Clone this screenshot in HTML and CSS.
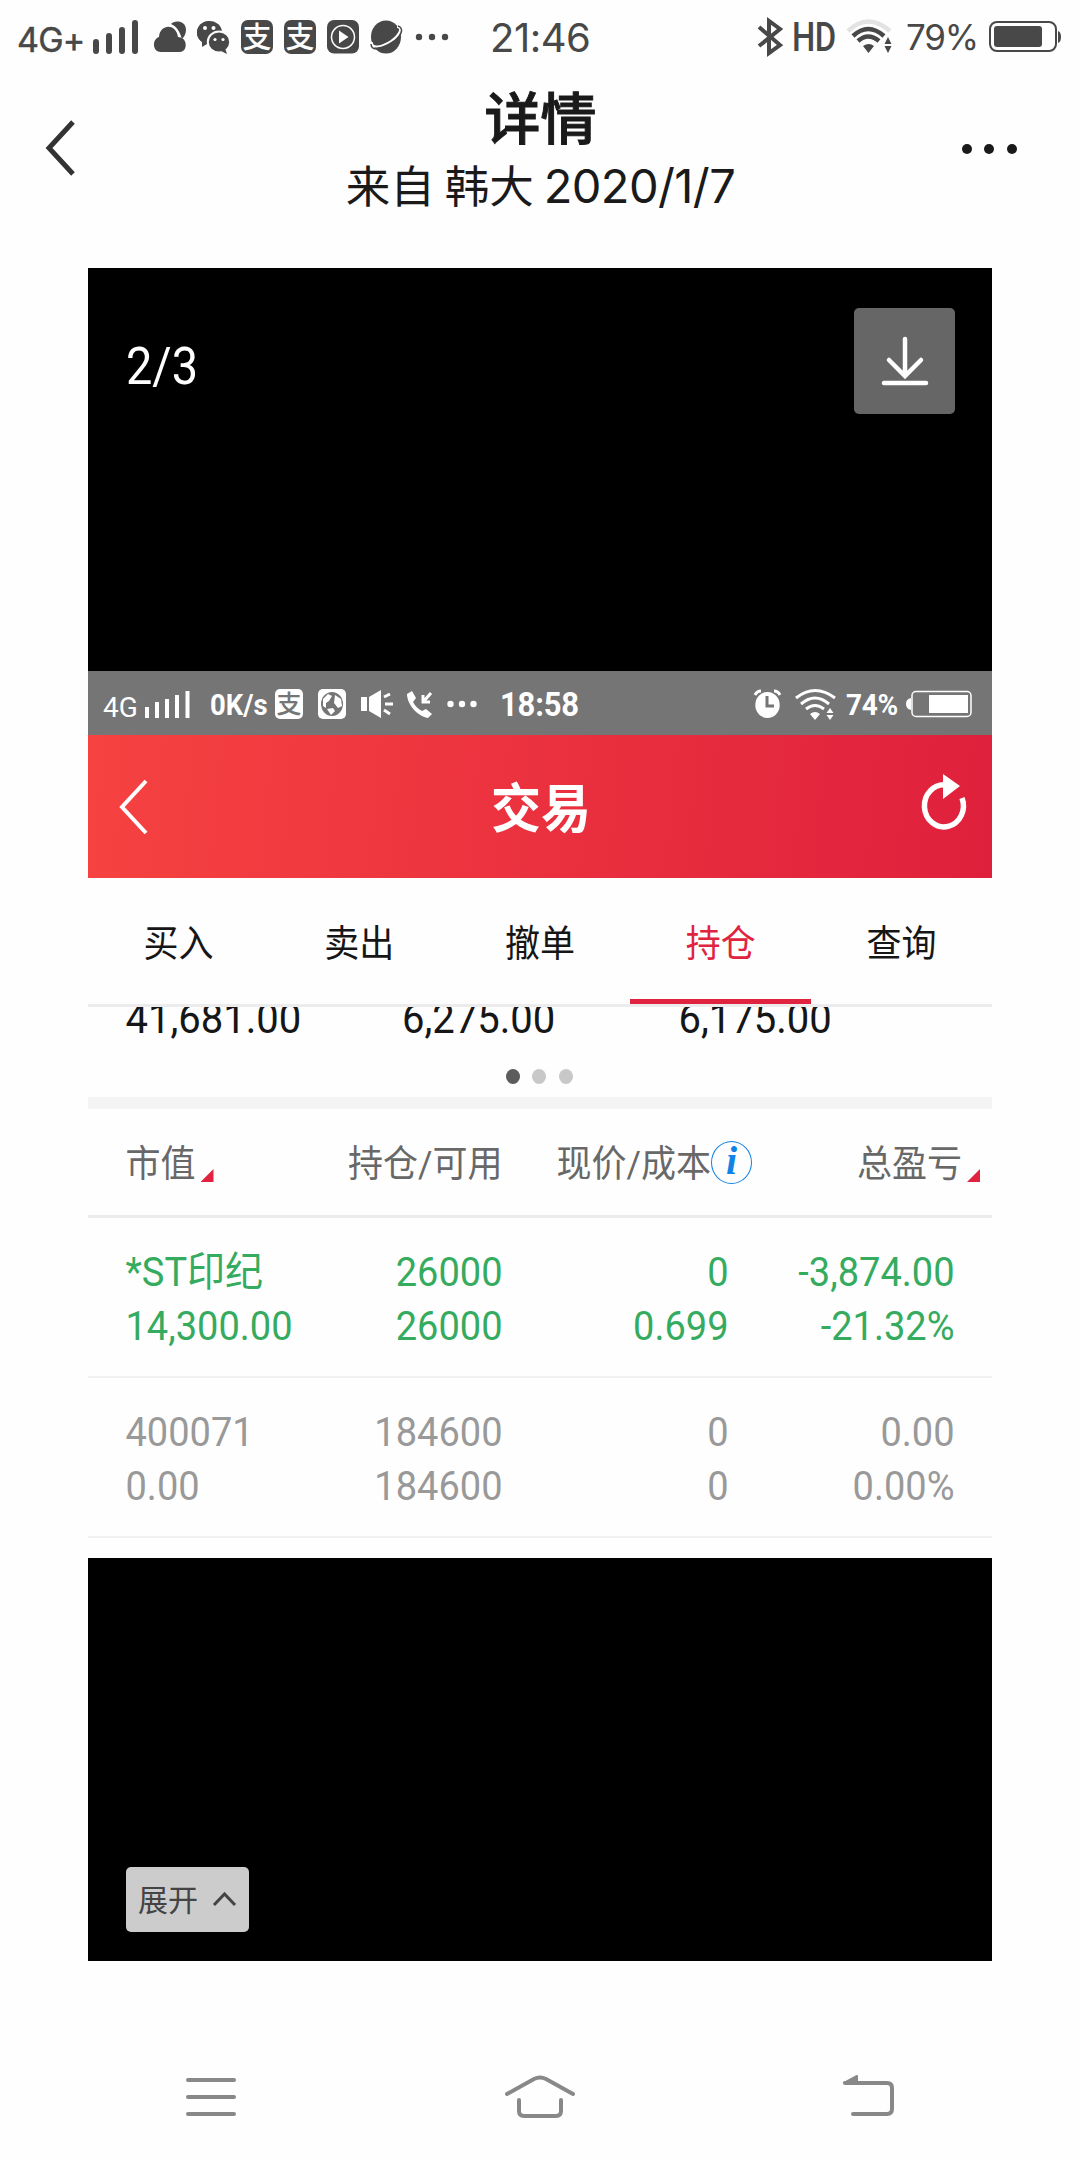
FILE: index.html
```
<!DOCTYPE html>
<html lang="zh-CN">
<head>
    <meta charset="UTF-8">
    <meta name="viewport" content="width=device-width, initial-scale=1.0">
    <title>详情</title>
    <link rel="stylesheet" href="styles.css">
</head>
<body>
    <div class="status-bar">
        <span class="network">4G+</span>
        <svg class="signal" width="46" height="34" viewBox="0 0 46 34"><path d="M3 22v9M16 16v15M29 10v21M42 3v28"/></svg>
        <div class="notices">
            <svg width="32" height="34" viewBox="0 0 32 34">
                <path d="M17 4C20 0 32 0 32 10C32 14 30 17 28 19C26 13 24 7 17 4Z"/>
                <path d="M7 32C-2 32-2 19 5 17C6 4 22 3 24 17C34 17 34 32 26 32Z"/>
            </svg>
            <svg width="33" height="34" viewBox="0 0 33 34">
                <path d="M13 1C5 1 0 6 0 13c0 4 2 7 5 9v5l5-3h3z"/><ellipse cx="12.500" cy="12.500" rx="12.500" ry="11.500"/>
                <ellipse class="paper-line" cx="22" cy="22" rx="11.200" ry="10.500"/><path d="M24 31l6 3-2-6z"/>
                <g class="paper"><circle cx="8" cy="8" r="2"/><circle cx="16.500" cy="8" r="2"/><circle cx="18" cy="19.500" r="1.600"/><circle cx="26" cy="19.500" r="1.600"/></g>
            </svg>
            <span class="pay-icon">支</span>
            <span class="pay-icon">支</span>
            <svg width="32" height="34" viewBox="0 0 32 34">
                <rect width="32" height="33.500" rx="7"/><circle class="ring" cx="16" cy="17" r="11.500"/><path class="paper" d="M12 10.500L21.500 17L12 23.500Z"/>
            </svg>
            <svg width="33" height="34" viewBox="0 0 33 34">
                <ellipse cx="16" cy="17" rx="15" ry="16.500"/><path class="orbit" d="M27 7C33 7 30 15 21 21S1 29 2 22"/><path class="orbit-edge" d="M28 6C35 8 31 17 22 23S1 32 1 24"/>
            </svg>
            <svg class="more" width="34" height="34" viewBox="0 0 34 34"><circle cx="5" cy="17" r="3.200"/><circle cx="18" cy="17" r="3.200"/><circle cx="31" cy="17" r="3.200"/></svg>
        </div>
        <span class="clock">21:46</span>
        <svg class="bluetooth" width="26" height="38" viewBox="0 0 26 38"><path d="M1 9l21 18-11 8V3l11 8L1 28"/></svg>
        <span class="hd">HD</span>
        <svg class="wifi" width="48" height="36" viewBox="0 0 48 36">
            <path class="faint" d="M2 12Q22-7 44 12"/><path d="M7 17Q22 3 38 17M12 22Q22 13 33 22"/><path class="solid" d="M17 27q6-4 11 0l-5.500 7zM42 18l3.500 7h-7zM42 34l3.500-7h-7z"/>
        </svg>
        <span class="percent">79%</span>
        <svg class="battery" width="74" height="34" viewBox="0 0 74 34"><rect class="shell" x="2" y="2" width="66" height="29" rx="7"/><rect x="6" y="6" width="48" height="21" rx="3"/><path d="M70 11q3 1 3 6t-3 6z"/></svg>
    </div>

    <header class="title-bar">
        <svg class="back" width="32" height="58" viewBox="0 0 32 58"><path d="M28 3L4 29L28 55"/></svg>
        <div class="titles">
            <h1>详情</h1>
            <p>来自 韩大 <span>2020/1/7</span></p>
        </div>
        <div class="menu-dots"><i></i><i></i><i></i></div>
    </header>

    <main class="photo">
        <div class="photo-top">
            <span class="counter">2/3</span>
            <div class="download">
                <svg width="48" height="52" viewBox="0 0 48 52"><path d="M24 5V42M8 26L24 42L40 26M3 49H45"/></svg>
            </div>
        </div>

        <div class="shot">
            <div class="shot-status">
                <span class="shot-net">4G</span>
                <svg class="shot-signal" width="45" height="28" viewBox="0 0 45 28"><path d="M2 28V17M12 28V12M22 28V9M32 28V5M42.500 28V1"/></svg>
                <span class="speed tall">0K/s</span>
                <span class="shot-pay">支</span>
                <svg class="globe" width="28" height="30" viewBox="0 0 28 30">
                    <rect width="28" height="30" rx="5"/><ellipse class="sea" cx="14" cy="15" rx="11" ry="12"/><path d="M5 10l5-5 4 2-3 5-3 2v5l-3-2zM17 6l6 4 1 7-4 2-4-5zM9 20l6-1 2 3-4 4z"/>
                </svg>
                <svg class="speaker" width="33" height="28" viewBox="0 0 33 28"><path d="M0 7h6v14H0zM8 7L20 0v28L8 21z"/><path class="line" d="M23 7l6-3M24 14h8M23 20l6 4"/></svg>
                <svg class="phone" width="26" height="28" viewBox="0 0 26 28"><path d="M0 4L5 1l4 7-3 4c2 4 5 7 9 9l4-2 6 5-4 4C10 26 0 14 0 4z"/><path class="line" d="M24 3l-7 8M16 5v7h7"/></svg>
                <svg class="shot-more" width="30" height="28" viewBox="0 0 30 28"><circle cx="3.500" cy="14" r="3.200"/><circle cx="15" cy="14" r="3.200"/><circle cx="26.500" cy="14" r="3.200"/></svg>
                <span class="shot-clock tall">18:58</span>
                <svg class="alarm" width="27" height="30" viewBox="0 0 27 30"><ellipse cx="13.500" cy="16" rx="12.200" ry="13"/><path class="line" d="M1 6Q3 2 7 2M26 6Q24 2 20 2"/><path class="hands" d="M13 7v10h7"/></svg>
                <svg class="shot-wifi" width="41" height="31" viewBox="0 0 41 31"><path class="line" d="M1 9Q20-6 40 9M6 15Q20 3 34 15M11 20Q20 13 29 20"/><path d="M15 25q5-4 10 0l-5 6zM35 19l3.500 5h-7zM35 31l3.500-5h-7z"/></svg>
                <span class="shot-percent tall">74%</span>
                <svg class="shot-battery" width="67" height="28" viewBox="0 0 67 28"><path d="M5 8v12q-5-1-5-6t5-6z"/><rect class="shell" x="6" y="1.500" width="59" height="25" rx="4"/><rect x="23" y="5" width="39" height="18"/></svg>
            </div>

            <div class="trade-bar">
                <svg width="28" height="56" viewBox="0 0 28 56"><path d="M27 2L3 28L27 54"/></svg>
                <h2 class="tall">交易</h2>
                <svg width="46" height="56" viewBox="0 0 46 56"><path d="M24 11A19.500 21 0 1 0 40 24"/><path class="arrow" d="M21 0L38 12L21 25Z"/></svg>
            </div>

            <nav class="tabs">
                <a><span class="tall">买入</span></a>
                <a><span class="tall">卖出</span></a>
                <a><span class="tall">撤单</span></a>
                <a class="active"><span class="tall">持仓</span></a>
                <a><span class="tall">查询</span></a>
            </nav>

            <!-- amounts are scrolled partly under the tabs -->
            <section class="summary">
                <div class="amounts">
                    <span class="tall">41,681.00</span>
                    <span class="tall">6,275.00</span>
                    <span class="tall">6,175.00</span>
                </div>
                <div class="pager"><i class="on"></i><i></i><i></i></div>
            </section>

            <section class="holdings">
                <div class="row head">
                    <div class="sortable"><span class="tall">市值</span></div>
                    <div><span class="tall">持仓/可用</span></div>
                    <div class="price-head"><span class="tall">现价/成本</span><span class="info">i</span></div>
                    <div class="sortable last"><span class="tall">总盈亏</span></div>
                </div>
                <div class="row loss">
                    <div><span class="tall">*ST印纪</span><span class="tall">14,300.00</span></div>
                    <div><span class="tall">26000</span><span class="tall">26000</span></div>
                    <div><span class="tall">0</span><span class="tall">0.699</span></div>
                    <div><span class="tall">-3,874.00</span><span class="tall">-21.32%</span></div>
                </div>
                <div class="row flat">
                    <div><span class="tall">400071</span><span class="tall">0.00</span></div>
                    <div><span class="tall">184600</span><span class="tall">184600</span></div>
                    <div><span class="tall">0</span><span class="tall">0</span></div>
                    <div><span class="tall">0.00</span><span class="tall">0.00%</span></div>
                </div>
            </section>
        </div>

        <div class="photo-bottom">
            <button class="expand"><span>展开</span>
                <svg width="25" height="16" viewBox="0 0 25 16"><path d="M2 14L12.500 3L23 14"/></svg>
            </button>
        </div>
    </main>

    <footer class="nav-bar">
        <svg width="50" height="44" viewBox="0 0 50 44"><path d="M2 5H48M2 22H48M2 39H48"/></svg>
        <svg width="70" height="44" viewBox="0 0 70 44"><path d="M2 19L29 4Q35 1 41 4L68 19M14 25V36Q14 41 19 41H51Q56 41 56 36V25"/></svg>
        <svg width="52" height="44" viewBox="0 0 52 44"><path d="M2 8H44Q49 8 49 13V34Q49 39 44 39H10"/><path class="tip" d="M1 8L14 1V8Z"/></svg>
    </footer>
</body>
</html>
```
FILE: styles.css
```
* {
    box-sizing: border-box;
}
body {
    margin: 0;
    width: 1080px;
    height: 2160px;
    background-color: #fefefe;
    font-family: Inter, "Noto Sans CJK SC", sans-serif;
    overflow: hidden;
}
svg {
    display: block;
    flex: none;
    fill: none;
    overflow: visible;
}
h1, h2, p {
    margin: 0;
}

/* phone status bar */
.status-bar {
    display: flex;
    align-items: center;
    height: 74px;
    padding-left: 17px;
    color: #484848;
    white-space: nowrap;
}
.status-bar svg {
    fill: #484848;
}
.network {
    width: 76px;
    font-size: 34px;
    letter-spacing: -.8px;
    padding-top: 5px;
    -webkit-text-stroke: .5px #484848;
}
.status-bar .signal {
    fill: none;
    stroke: #484848;
    stroke-width: 6;
    stroke-linecap: round;
}
.notices {
    display: flex;
    gap: 11px;
    margin-left: 15px;
}
.pay-icon {
    width: 32px;
    height: 34px;
    border-radius: 7px;
    background-color: #484848;
    color: #fefefe;
    font: 500 29px/31px "Noto Sans CJK SC", sans-serif;
    text-align: center;
}
.paper {
    fill: #fefefe;
}
.paper-line {
    stroke: #fefefe;
    stroke-width: 2;
}
.ring {
    fill: none;
    stroke: #fefefe;
    stroke-width: 1.5;
}
.orbit {
    fill: none;
    stroke: #fefefe;
    stroke-width: 2;
}
.orbit-edge {
    fill: none;
    stroke: #484848;
    stroke-width: 1.5;
}
.clock {
    width: 268px;
    margin-left: 42px;
    font-size: 40px;
    letter-spacing: -.5px;
}
.status-bar .bluetooth {
    fill: none;
    stroke: #484848;
    stroke-width: 4;
}
.hd {
    width: 54px;
    margin-left: 8px;
    font: 500 41px Roboto, sans-serif;
    letter-spacing: -.5px;
    transform: scaleX(.8);
    transform-origin: left;
}
.status-bar .wifi {
    fill: none;
    stroke: #484848;
    stroke-width: 4.5;
}
.wifi .faint {
    stroke: #e3e3e3;
}
.wifi .solid {
    fill: #484848;
    stroke: none;
}
.percent {
    width: 76px;
    margin-left: 12px;
    font-size: 35px;
    letter-spacing: -1.2px;
}
.battery {
    margin-left: 6px;
}
.battery .shell {
    fill: none;
    stroke: #484848;
    stroke-width: 2;
}

/* page title */
.title-bar {
    display: flex;
    justify-content: space-between;
    height: 194px;
    padding: 0 63px 0 45px;
    color: #1a1a1a;
}
.back {
    margin-top: 50px;
    stroke: #333;
    stroke-width: 5;
}
.title-bar .back {
    margin-top: 45px;
}
.titles {
    text-align: center;
    margin-left: 42px;
}
.titles h1 {
    font: 500 56px/86px "Noto Sans CJK SC", sans-serif;
    margin-top: -2px;
    -webkit-text-stroke: 1px #1a1a1a;
}
.titles p {
    font: 44.5px/52px "Noto Sans CJK SC", sans-serif;
    white-space: nowrap;
}
.titles p span {
    font-family: Inter, sans-serif;
    font-size: 47px;
    letter-spacing: -.6px;
}
.menu-dots {
    display: flex;
    gap: 12.5px;
    padding-top: 70px;
}
.menu-dots i {
    width: 10px;
    height: 10px;
    border-radius: 50%;
    background-color: #1a1a1a;
}

/* shared picture */
.photo {
    width: 904px;
    height: 1693px;
    margin: 0 auto;
    background-color: #000;
}
.photo-top {
    display: flex;
    justify-content: space-between;
    height: 403px;
    padding: 40px 37px 0 38px;
}
.counter {
    font: 51px/118px Roboto, sans-serif;
    color: #fff;
    transform: scaleX(.92);
    transform-origin: left;
}
.download {
    display: flex;
    justify-content: center;
    width: 101px;
    height: 106px;
    padding-top: 26px;
    border-radius: 5px;
    background-color: #666;
}
.download svg {
    stroke: #fff;
    stroke-width: 4.5;
    stroke-linecap: round;
}
.shot {
    height: 887px;
    background-color: #fefefe;
    font-family: Roboto, "Noto Sans CJK SC", sans-serif;
}
/* the picture is stretched a little in height */
.tall {
    display: inline-block;
    transform: scaleY(1.07);
}
.shot-status {
    display: flex;
    align-items: center;
    height: 64px;
    padding: 2px 0 0 15px;
    background-color: #757575;
    color: #fff;
    white-space: nowrap;
}
.shot-status svg {
    fill: #fff;
}
.shot-status .line {
    fill: none;
    stroke: #fff;
    stroke-width: 3;
}
.shot-net {
    width: 42px;
    padding-top: 6px;
    font-size: 28px;
}
.shot-signal {
    stroke: #fff;
    stroke-width: 4;
}
.speed {
    width: 65px;
    margin-left: 20px;
    font-size: 27.5px;
    font-weight: bold;
}
.shot-pay {
    width: 28px;
    height: 30px;
    border-radius: 5px;
    background-color: #fff;
    color: #757575;
    font: 500 25px/27px "Noto Sans CJK SC", sans-serif;
    text-align: center;
}
.globe {
    margin-left: 15px;
}
.globe .sea {
    fill: #757575;
}
.speaker {
    margin-left: 15px;
}
.phone {
    margin-left: 13px;
}
.shot-more {
    margin-left: 14px;
}
.shot-clock {
    width: 254px;
    margin-left: 23px;
    font-size: 31px;
    font-weight: bold;
    letter-spacing: -.2px;
}
.alarm .hands {
    fill: none;
    stroke: #757575;
    stroke-width: 3;
}
.shot-wifi {
    margin-left: 14px;
}
.shot-percent {
    width: 60px;
    margin-left: 10px;
    font-size: 28px;
    font-weight: bold;
    letter-spacing: -.3px;
}
.shot-status .shell {
    fill: none;
    stroke: #fff;
    stroke-width: 1.5;
}
.trade-bar {
    display: flex;
    align-items: center;
    justify-content: space-between;
    height: 143px;
    padding: 0 24px 0 31px;
    background: linear-gradient(95deg, #f64241, #df203c);
    color: #fff;
}
.trade-bar h2 {
    font-size: 50px;
    font-weight: bold;
    margin: -6px 0 0 13px;
}
.trade-bar svg {
    stroke: #fff;
    stroke-width: 4;
}
.trade-bar svg:last-child {
    stroke-width: 5.5;
    margin-top: -9px;
}
.trade-bar .arrow {
    fill: #fff;
    stroke: none;
}
.tabs {
    display: flex;
    height: 129px;
    border-bottom: 3px solid #ececec;
    color: #161616;
    font-size: 35px;
}
.tabs a {
    flex: 1;
    padding-top: 5px;
    line-height: 124px;
    height: 126px;
    text-align: center;
    border-bottom: 5px solid transparent;
}
.tabs .active {
    color: #e0243f;
    border-bottom-color: #e0243f;
}
.summary {
    height: 102px;
    border-bottom: 12px solid #f4f4f4;
    overflow: hidden;
}
.amounts {
    display: flex;
    height: 62px;
    padding-left: 37.5px;
    color: #161616;
    font-size: 40px;
    line-height: 25px;
}
.amounts span {
    width: 276.5px;
}
.pager {
    display: flex;
    justify-content: center;
    gap: 12.5px;
    margin-right: 2px;
}
.pager i {
    width: 14px;
    height: 15px;
    border-radius: 50%;
    background-color: #c8c8c8;
}
.pager .on {
    background-color: #5c5c5c;
}
.row {
    display: flex;
    height: 160px;
    padding-top: 27px;
    border-bottom: 2px solid #f1f1f1;
    font-size: 38px;
    line-height: 54px;
}
.row > div {
    display: flex;
    flex-direction: column;
    width: 226px;
    min-width: 0;
    flex: none;
    padding-right: 37.5px;
    text-align: right;
    white-space: nowrap;
}
.row > div:first-child {
    padding: 0 0 0 37.5px;
    text-align: left;
}
.row.head {
    height: 109px;
    padding-top: 26px;
    border-bottom: 3px solid #ececec;
    color: #686868;
    font-size: 35px;
}
.row.head > div {
    flex-direction: row;
    justify-content: flex-end;
}
.row.head .tall {
    margin-top: 4px;
}
.row.head > div:first-child {
    justify-content: flex-start;
}
.sortable::after {
    content: "";
    width: 13px;
    height: 13px;
    margin: 34px 0 0 5px;
    background-color: #e0243f;
    clip-path: polygon(100% 0, 100% 100%, 0 100%);
}
.row.head .last {
    padding-right: 12px;
}
.row.head .price-head {
    padding-right: 14px;
}
.info {
    width: 41px;
    height: 43px;
    margin-top: 6px;
    border: 1.5px solid #1183e6;
    border-radius: 50%;
    color: #1183e6;
    font: italic bold 40px/38px "Liberation Serif", serif;
    text-align: center;
}
.loss {
    color: #35ab5f;
}
.flat {
    color: #999;
}
.photo-bottom {
    height: 403px;
    padding: 309px 38px 0;
}
.expand {
    display: flex;
    align-items: center;
    width: 123px;
    height: 65px;
    padding: 0 0 0 12px;
    border: 0;
    border-radius: 5px;
    background-color: #ccc;
    color: #444;
    font: 30px "Noto Sans CJK SC", sans-serif;
}
.expand span {
    margin-top: -3px;
}
.expand svg {
    margin: 0 0 2px 14px;
    stroke: #444;
    stroke-width: 3;
}

/* system buttons */
.nav-bar {
    display: flex;
    justify-content: space-between;
    padding: 114px 185px 0 186px;
}
.nav-bar svg {
    stroke: #888;
    stroke-width: 4;
    stroke-linecap: round;
    stroke-linejoin: round;
}
.nav-bar .tip {
    fill: #888;
    stroke-width: 2;
}
```
